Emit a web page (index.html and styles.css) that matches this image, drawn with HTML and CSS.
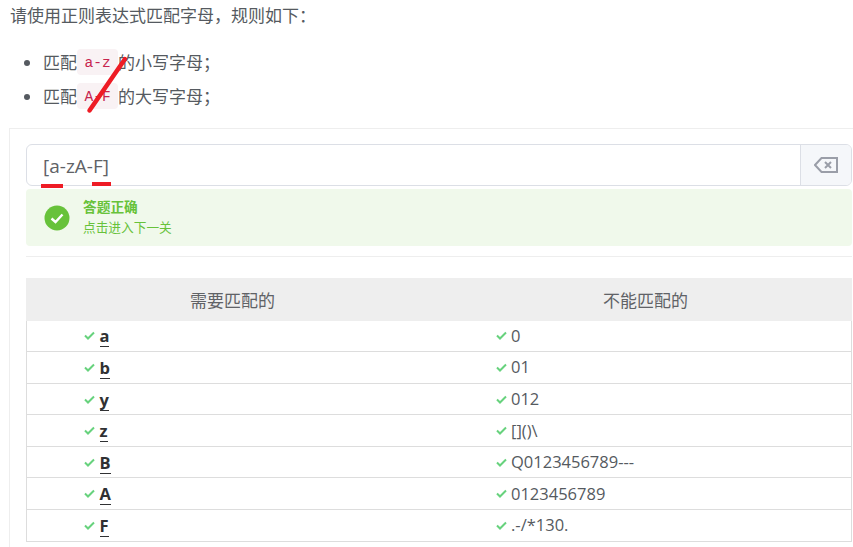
FILE: index.html
```html
<!DOCTYPE html>
<html lang="zh-CN">
<head>
<meta charset="utf-8">
<title>正则表达式</title>
<link rel="stylesheet" href="styles.css">
</head>
<body>
<main class="page">
  <p class="intro">请使用正则表达式匹配字母，规则如下：</p>
  <ul class="rules">
    <li>匹配<code>a-z</code>的小写字母；</li>
    <li>匹配<code>A-F</code>的大写字母；</li>
  </ul>
  <section class="panel">
    <div class="input-group">
      <div class="input">[a-zA-F]</div>
      <button class="clear" type="button" aria-label="清除">
        <svg width="24" height="16" viewBox="0 0 24 16"><path d="M7.5 1H23v14H7.5L1 8z" fill="none" stroke="#9a9ea8" stroke-width="2"/><path d="M11 5l6 6M17 5l-6 6" fill="none" stroke="#9a9ea8" stroke-width="2"/></svg>
      </button>
    </div>
    <div class="alert">
      <svg class="alert-icon" width="26" height="26" viewBox="0 0 26 26"><circle cx="13" cy="13" r="12.5" fill="#67c23a"/><path d="M7.5 13.5l4 3.5 7-7.5" fill="none" stroke="#fff" stroke-width="2.4"/></svg>
      <div class="alert-text">
        <div class="alert-title">答题正确</div>
        <div class="alert-desc">点击进入下一关</div>
      </div>
    </div>
    <hr class="divider">
    <div class="table">
      <div class="thead"><div>需要匹配的</div><div>不能匹配的</div></div>
      <div class="row"><div class="cell"><svg class="tick" viewBox="0 0 11 9"><path d="M1 4.5l3 3 6-6" /></svg><b>a</b></div><div class="cell"><svg class="tick" viewBox="0 0 11 9"><path d="M1 4.5l3 3 6-6" /></svg>0</div></div>
      <div class="row"><div class="cell"><svg class="tick" viewBox="0 0 11 9"><path d="M1 4.5l3 3 6-6" /></svg><b>b</b></div><div class="cell"><svg class="tick" viewBox="0 0 11 9"><path d="M1 4.5l3 3 6-6" /></svg>01</div></div>
      <div class="row"><div class="cell"><svg class="tick" viewBox="0 0 11 9"><path d="M1 4.5l3 3 6-6" /></svg><b>y</b></div><div class="cell"><svg class="tick" viewBox="0 0 11 9"><path d="M1 4.5l3 3 6-6" /></svg>012</div></div>
      <div class="row"><div class="cell"><svg class="tick" viewBox="0 0 11 9"><path d="M1 4.5l3 3 6-6" /></svg><b>z</b></div><div class="cell"><svg class="tick" viewBox="0 0 11 9"><path d="M1 4.5l3 3 6-6" /></svg>[]()\</div></div>
      <div class="row"><div class="cell"><svg class="tick" viewBox="0 0 11 9"><path d="M1 4.5l3 3 6-6" /></svg><b>B</b></div><div class="cell"><svg class="tick" viewBox="0 0 11 9"><path d="M1 4.5l3 3 6-6" /></svg>Q0123456789---</div></div>
      <div class="row"><div class="cell"><svg class="tick" viewBox="0 0 11 9"><path d="M1 4.5l3 3 6-6" /></svg><b>A</b></div><div class="cell"><svg class="tick" viewBox="0 0 11 9"><path d="M1 4.5l3 3 6-6" /></svg>0123456789</div></div>
      <div class="row"><div class="cell"><svg class="tick" viewBox="0 0 11 9"><path d="M1 4.5l3 3 6-6" /></svg><b>F</b></div><div class="cell"><svg class="tick" viewBox="0 0 11 9"><path d="M1 4.5l3 3 6-6" /></svg>.-/*130.</div></div>
    </div>
  </section>
  <svg class="marks" width="853" height="547" viewBox="0 0 853 547">
    <path d="M125 59L89.5 110.5" fill="none" stroke="#ee1c25" stroke-width="4.5" stroke-linecap="round"/>
    <rect x="41" y="184" width="22" height="4" fill="#ee1c25"/>
    <rect x="92" y="182" width="19" height="4" fill="#ee1c25"/>
  </svg>
</main>
</body>
</html>
```
FILE: styles.css
```css
* { box-sizing: border-box; }
html, body { margin: 0; height: 547px; overflow: hidden; background: #fff; }
body { font: 17px/24px "Open Sans", "Noto Sans CJK SC", sans-serif; color: #555a60; }
.page { position: relative; width: 853px; height: 547px; padding: 4px 0 0 9px; overflow: hidden; }
.intro { margin: 0 0 20px 1px; }
.rules { margin: 0 0 13px; padding: 0 0 0 34px; height: 67px; }
.rules li { height: 34px; line-height: 28px; padding-top: 1px; }
.rules li::marker { color: #555a60; }
code { display: inline-block; height: 26px; padding: 0 7.5px; border-radius: 4px; background: #f9f2f4; color: #c7254e; font: 14.5px/28px "Liberation Mono", monospace; vertical-align: top; }
.panel { width: 844px; height: 420px; padding: 15px 0 0 16px; border: 1px solid #eeeeee; border-right: 0; border-bottom: 0; }
.input-group { display: flex; width: 826px; height: 42px; border: 1px solid #dcdfe6; border-radius: 6px; overflow: hidden; }
.input { flex: 1; padding: 9px 16px 0; font-size: 19px; line-height: 24px; color: #606266; }
.clear { display: flex; align-items: center; justify-content: center; width: 51px; padding: 0; border: 0; border-left: 1px solid #dcdfe6; background: #f5f7fa; }
.alert { display: flex; align-items: center; width: 826px; height: 57px; margin-top: 3px; padding-left: 18px; border-radius: 4px; background: #f0f9eb; color: #67c23a; }
.alert-icon { flex: none; margin-right: 13px; }
.alert-text { padding-bottom: 2px; font-size: 12.7px; line-height: 20px; }
.alert-title { font-size: 13.7px; font-weight: 700; }
.divider { width: 826px; height: 1px; margin: 10px 0 21px; border: 0; background: #eeeeee; }
.table { width: 826px; }
.thead { display: grid; grid-template-columns: 1fr 1fr; height: 42.6px; background: #eeeeee; line-height: 46px; text-align: center; color: #606266; }
.row { display: grid; grid-template-columns: 1fr 1fr; height: 31.57px; border: 1px solid #dddddd; border-top: 0; }
.cell { display: flex; align-items: center; padding-left: 56px; font-size: 16.5px; line-height: 30px; }
.tick { flex: none; width: 11px; height: 9px; margin: 0 4.5px 0 1px; fill: none; stroke: #67d27d; stroke-width: 2; }
.cell + .cell .tick { margin-right: 4px; }
.cell b { color: #303133; border-bottom: 1px solid #303133; line-height: 21px; margin-top: 1px; }
.marks { position: absolute; left: 0; top: 0; pointer-events: none; }
```
